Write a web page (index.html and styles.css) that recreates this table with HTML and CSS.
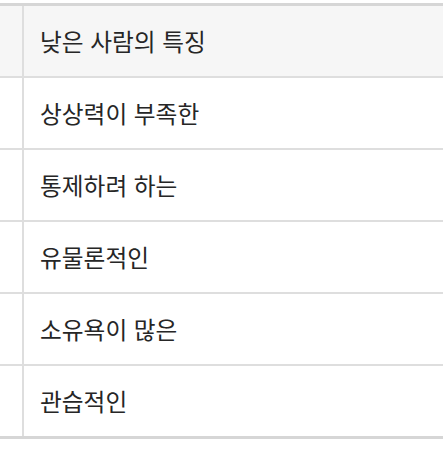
FILE: index.html
```html
<!DOCTYPE html>
<html lang="ko">
<head>
<meta charset="utf-8">
<link rel="stylesheet" href="styles.css">
</head>
<body>
<div class="wrap">
  <table class="traits">
    <thead>
      <tr><th class="side"></th><th class="main">낮은 사람의 특징</th></tr>
    </thead>
    <tbody>
      <tr><td class="side"></td><td class="main">상상력이 부족한</td></tr>
      <tr><td class="side"></td><td class="main">통제하려 하는</td></tr>
      <tr><td class="side"></td><td class="main">유물론적인</td></tr>
      <tr><td class="side"></td><td class="main">소유욕이 많은</td></tr>
      <tr><td class="side"></td><td class="main">관습적인</td></tr>
    </tbody>
  </table>
</div>
</body>
</html>
```

FILE: styles.css
```css
html, body {
  margin: 0;
  padding: 0;
  background: #ffffff;
}
.wrap {
  padding-top: 3px;
}
.traits {
  width: 100%;
  border-collapse: collapse;
  border-top: 3px solid #d6d6d6;
  border-bottom: 3px solid #d6d6d6;
  font-family: "Noto Sans CJK KR", "Noto Sans", sans-serif;
  font-size: 23.7px;
  color: #262626;
}
.traits th, .traits td {
  height: 70px;
  padding: 0;
  text-align: left;
  font-weight: 400;
  vertical-align: middle;
  border-bottom: 2px solid #dedede;
}
.traits tbody tr:last-child td {
  border-bottom: none;
}
.traits thead th {
  background: #f6f6f6;
}
.traits .side {
  width: 22px;
  border-right: 2px solid #dedede;
}
.traits .main {
  padding-left: 16px;
}
```
